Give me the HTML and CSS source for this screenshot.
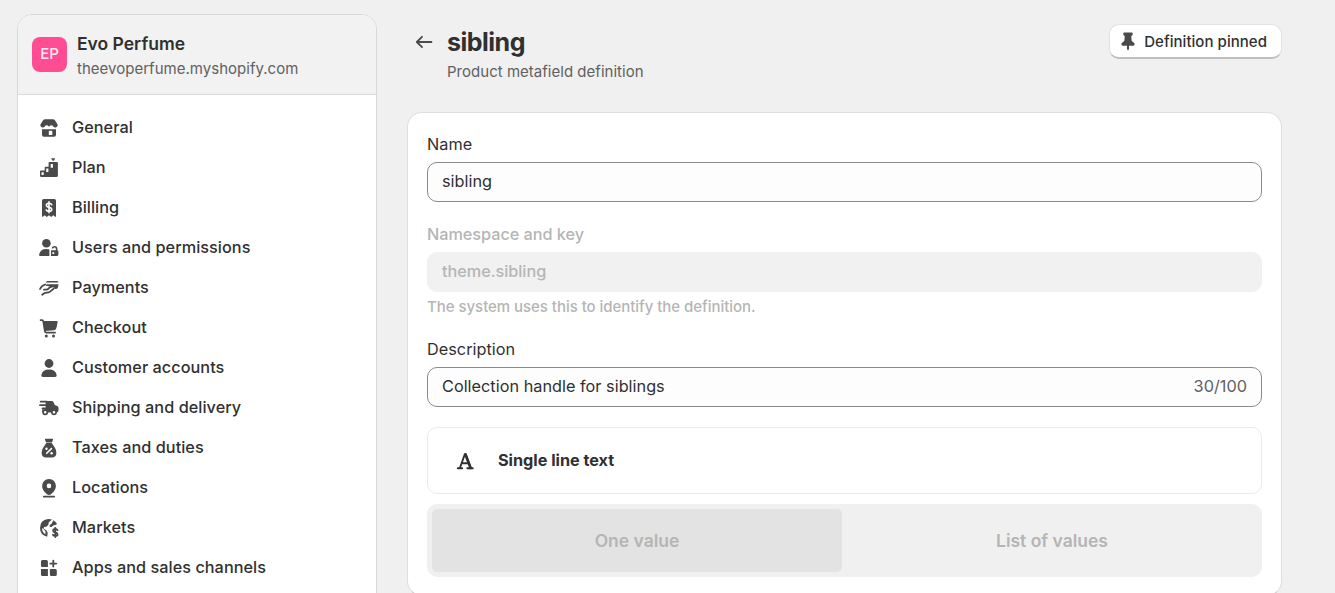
FILE: index.html
```html
<!DOCTYPE html>
<html lang="en">
<head>
<meta charset="utf-8">
<title>sibling</title>
<link rel="stylesheet" href="styles.css">
</head>
<body>
<div class="page">
  <aside class="sidebar">
    <header class="shop">
      <div class="avatar">EP</div>
      <div class="shop-text">
        <div class="shop-name">Evo Perfume</div>
        <div class="shop-url">theevoperfume.myshopify.com</div>
      </div>
    </header>
    <nav class="nav">
      <a class="nav-item"><svg class="icon" viewBox="0 0 20 20"><path d="M6 1.200h8q1.100 0 1.700.9L18 5.600q.7 1 .7 1.900a2.500 2.500 0 0 1-4.500.9 2 2 0 0 0-2-1.200q-1 0-1.400.9-.8.800-1.600 0-.4-.9-1.400-.9a2 2 0 0 0-2 1.200 2.500 2.500 0 0 1-4.500-.9q0-.9.700-1.900l2.300-3.500q.6-.9 1.700-.9z"/><path fill-rule="evenodd" d="M3 11.200h14v5.600q0 1.900-1.900 1.900H4.900Q3 18.700 3 16.800zM10.400 12.800q-.6 0-.6.600v3.600h3.500v-3.600q0-.6-.6-.6z"/></svg>General</a>
      <a class="nav-item"><svg class="icon" viewBox="0 0 20 20"><path d="M12.200.2h4L14.900 2.700h-1.400z"/><path fill-rule="evenodd" d="M13.700 4H18q.9 0 .9.900v12.500q0 1.600-1.600 1.600H2.600Q1 19 1 17.400v-4q0-.9.900-.9h3.800V9.700q0-.9.900-.9h3V4.900q0-.9.900-.9zM2.500 14.200v2.900h2.200v-2.900zm4.700-3.700v3.400h2.200v-3.400zm4.500-4.600v3.900h2.200V5.900z"/></svg>Plan</a>
      <a class="nav-item"><svg class="icon" viewBox="0 0 20 20"><path d="M4.700 1h10.600q1.700 0 1.700 1.700v16h-.9l-1.800-1.500-2.100 1.700-2.200-1.700-2.200 1.700-2.100-1.700-1.800 1.500H3v-16Q3 1 4.700 1z"/><path class="cut-line" d="M12.700 6.800Q12.200 5.300 10 5.300 7.400 5.300 7.400 7.200 7.400 8.700 10 9.200 12.700 9.700 12.700 11.500T10 13.400Q7.800 13.400 7.200 11.900M10 3.900v10.900"/></svg>Billing</a>
      <a class="nav-item"><svg class="icon" viewBox="0 0 20 20"><circle cx="7.400" cy="5.200" r="4.300"/><path d="M10.400 18H1.200q-1.400 0-1.100-1.300.9-5.700 7.300-5.700 1.700 0 3 .5z"/><path fill-rule="evenodd" d="M12 12.200h4.800v-1.500q0-1.200-1.200-1.200-1 0-1.200.9h-1.700q.2-2.500 2.900-2.500t2.800 2.700v1.600q1 .3 1 1.300v2.900q0 1.600-1.600 1.600H12zm1.300 2v1.700h1.900v-1.700z"/></svg>Users and permissions</a>
      <a class="nav-item"><svg class="icon" viewBox="0 0 20 20"><path d="M8.600 2.900h9.200q1.700 0 1.700 1.700H6.700q.4-1.700 1.900-1.700zM7.600 6.200h11.900l-.4 2.700q-.3 2.100-2.200 2.100h-1.300q.2-1.700-1.600-1.700-1 0-2 .8h-1.200q.4-2-1.500-2H7z"/><path class="line" d="M1 11Q2.600 7.500 6.200 6.500M5 11.700h2.400q1.200 0 2.100-1l1.200-1.300M14.600 10.700l-3.200 2.700q-1.500 1.300-3.500 1.300-2 0-3.400 1.100l-1.300 1"/></svg>Payments</a>
      <a class="nav-item"><svg class="icon" viewBox="0 0 20 20"><path d="M4.200 3h13.400q1.300 0 1 1.300l-1.200 5.800q-.4 1.900-2.300 2.100L6 13z"/><path class="line" d="M1.600 2.100h1.300q1.200 0 1.400 1.300l1.600 10q.2 1.300 1.500 1.300H16"/><circle cx="7.300" cy="18" r="1.500"/><circle cx="14.500" cy="18" r="1.500"/></svg>Checkout</a>
      <a class="nav-item"><svg class="icon" viewBox="0 0 20 20"><circle cx="10" cy="5.500" r="4.400"/><path d="M4 19q-2 0-1.700-1.700.8-5.900 7.700-5.900t7.700 5.900Q18 19 16 19z"/></svg>Customer accounts</a>
      <a class="nav-item"><svg class="icon" viewBox="0 0 20 20"><path d="M6.800 2.900h5.900q1.200 0 1.700 1.100L15.800 7l2.400.9q1.300.6 1.300 2v2.700q0 1.800-1.800 1.800H4.200q-1.100 0-1.100-1.700V11.500h3.500V3z"/><path class="line" d="M1.700 3.700h6M1 7.200h6M3.500 10.500h3"/><g class="wheel"><circle cx="6.200" cy="14.200" r="2.100"/><circle cx="15" cy="14.200" r="2.100"/></g></svg>Shipping and delivery</a>
      <a class="nav-item"><svg class="icon" viewBox="0 0 20 20"><path d="M6.700.8h6.700q.9 0 .6.900L12.900 4.600H7.100L6 1.700q-.3-.9.700-.9zM7.300 5h5.400l2.400 3.600q2.300 2.800 2.300 6 0 5-4.700 5H7.300q-4.700 0-4.700-5 0-3.200 2.300-6z"/><path class="cut-line" d="M7.700 15.300l4.700-4.700"/><circle class="cut" cx="7.500" cy="10.700" r="1.200"/><circle class="cut" cx="12.600" cy="15.200" r="1.200"/></svg>Taxes and duties</a>
      <a class="nav-item"><svg class="icon" viewBox="0 0 20 20"><path fill-rule="evenodd" d="M10 1a6.800 6.800 0 0 1 6.900 7q0 4.400-4.900 8.300-2 1.600-4 0Q3.100 12.400 3.100 8A6.800 6.800 0 0 1 10 1zm0 4.600a2.300 2.300 0 1 0 0 4.600 2.300 2.300 0 0 0 0-4.600z"/><path class="line" d="M4.800 18.600h10.400"/></svg>Locations</a>
      <a class="nav-item"><svg class="icon" viewBox="0 0 20 20"><path d="M9 1q2-.1 4 .6L9.700 4.500 9.300 7 7.200 8.700l-2 .3-.7 1.400 3 2 1.200 2.300-.5 4.100Q1 17 1 10 1 2 9 1z"/><path d="M14.300 2.200q2.600 1.300 3.800 3.900l-1.800 1q-2.500.2-3.700 2l-1.900-.3-.1-1.600 2.200-1.700z"/><path class="cut" d="M3 9.900l2 1.500 1.500 2.300v2.600Q3 14.400 3 9.900z"/><path class="line" d="M18.500 12.100q-.6-1.100-2.200-1.100-2.200 0-2.200 1.700 0 1.300 2.200 1.700t2.300 1.800q0 1.700-2.300 1.700-1.700 0-2.400-1.200M16.300 9.800v9.300"/></svg>Markets</a>
      <a class="nav-item"><svg class="icon" viewBox="0 0 20 20"><path d="M3.500 1.900h3.900q1.500 0 1.500 1.500v5.500H3.500Q2 8.900 2 7.400v-4q0-1.500 1.500-1.500zM2 10.900h6.900v7H3.500Q2 17.900 2 16.400zM10.900 10.900h5.400q1.500 0 1.500 1.500v4q0 1.500-1.500 1.500h-3.900q-1.500 0-1.500-1.500z"/><path class="line" d="M14.300 2.600v6M11.300 5.600h6"/></svg>Apps and sales channels</a>
    </nav>
  </aside>

  <main class="main">
    <header class="heading">
      <svg class="back" viewBox="0 0 20 20"><path d="M17.500 10H3M8 4.800L2.800 10 8 15.200"/></svg>
      <div class="titles">
        <h1 class="title">sibling</h1>
        <p class="subtitle">Product metafield definition</p>
      </div>
      <button class="pinned"><svg class="pin" viewBox="0 0 14 19"><path d="M3.200.5h7.600q.9 0 .9 1v1q0 .7-.7 1l-.8.500.5 4.900 2 1.500q1 .8 1 1.900 0 1.400-1.400 1.400H8v3.300l-1 1.500-1-1.500v-3.300H1.700q-1.400 0-1.400-1.400 0-1.100 1-1.900l2-1.500.5-4.900L3 3.500q-.7-.3-.7-1v-1q0-1 .9-1z"/></svg>Definition pinned</button>
    </header>

    <section class="card">
      <div class="field">
        <div class="label">Name</div>
        <div class="input">sibling</div>
      </div>
      <div class="field field-disabled">
        <div class="label">Namespace and key</div>
        <div class="input">theme.sibling</div>
        <div class="help">The system uses this to identify the definition.</div>
      </div>
      <div class="field">
        <div class="label">Description</div>
        <div class="input">Collection handle for siblings<span class="count">30/100</span></div>
      </div>
      <div class="type">
        <svg class="type-icon" viewBox="0 0 18 18"><path d="M1.800 16.200h4.400M11.300 16.200h5.500M3.900 16L8.800 2.200h.9L14.900 16M5.600 11.300h7.500"/><path class="stem" d="M9.500 2.500l5 13.500"/></svg>
        Single line text
      </div>
      <div class="segments">
        <div class="segment segment-on">One value</div>
        <div class="segment segment-off">List of values</div>
      </div>
    </section>
  </main>
</div>
</body>
</html>
```
FILE: styles.css
```css
* { box-sizing: border-box; }
body {
  margin: 0;
  height: 593px;
  overflow: hidden;
  background: #f0f0f0;
  color: #303030;
  font: 420 16.25px/25px Inter, "Liberation Sans", sans-serif;
  letter-spacing: .02px;
}
.page {
  display: flex;
  align-items: flex-start;
  gap: 30px;
  height: 593px;
  padding: 14px 53px 0 17px;
  overflow: hidden;
}
.sidebar {
  width: 360px;
  height: 620px;
  flex: none;
  overflow: hidden;
  background: #fff;
  border: 1px solid #d8d8d8;
  border-radius: 15px;
}
.shop {
  display: flex;
  align-items: center;
  gap: 10px;
  height: 80px;
  padding: 0 14px;
  background: #f2f2f2;
  border-bottom: 1px solid #dadada;
}
.avatar {
  width: 35px;
  height: 35px;
  border-radius: 8px;
  background: #ff4c93;
  color: #ffe9f2;
  font-size: 15px;
  font-weight: 550;
  line-height: 34px;
  text-align: center;
}
.shop-text { padding-top: 2px; }
.shop-name { font-size: 17.5px; font-weight: 600; letter-spacing: 0; }
.shop-url { color: #616161; font-size: 15px; }
.nav { padding: 12px 0 0 21px; }
.nav-item {
  display: flex;
  align-items: center;
  gap: 13px;
  height: 40px;
  font-weight: 550;
  letter-spacing: .04px;
}
.icon {
  width: 20px;
  height: 20px;
  margin-top: 2px;
  fill: #4a4a4a;
}
.icon .line { fill: none; stroke: #4a4a4a; stroke-width: 1.8; stroke-linecap: round; stroke-linejoin: round; }
.icon .cut { fill: #fff; }
.icon .cut-line { fill: none; stroke: #fff; stroke-width: 1.6; stroke-linecap: round; }
.wheel { fill: #fff; stroke: #4a4a4a; stroke-width: 1.7; }
.main { flex: 1; }
.heading {
  display: flex;
  align-items: flex-start;
  height: 98px;
  padding-top: 10px;
}
.back {
  width: 20px;
  height: 20px;
  margin: 8px 13px 0 7px;
  fill: none;
  stroke: #4a4a4a;
  stroke-width: 1.8;
  stroke-linecap: round;
  stroke-linejoin: round;
}
.titles { flex: 1; }
.title { margin: 3px 0 0; font-size: 25px; font-weight: 700; line-height: 31px; letter-spacing: -.5px; }
.subtitle { margin: 1px 0 0; color: #616161; font-size: 15px; line-height: 25px; }
.pinned {
  display: flex;
  align-items: center;
  gap: 9px;
  height: 35px;
  padding: 1px 14px 0 11px;
  border: 1px solid #e1e1e1;
  border-bottom: 2px solid #bebebe;
  border-radius: 10px;
  background: #fff;
  color: #303030;
  font: 550 15px/20px Inter, sans-serif;
  letter-spacing: .04px;
}
.pin { width: 14px; height: 19px; fill: #4a4a4a; }
.card {
  height: 484px;
  padding: 19px;
  border: 1px solid #dedede;
  border-bottom-color: #c4c4c4;
  border-radius: 15px;
  background: #fff;
}
.field { margin-bottom: 20px; }
.label { margin-bottom: 5px; }
.input {
  display: flex;
  justify-content: space-between;
  align-items: center;
  height: 40px;
  padding: 0 14px 2px;
  border: 1px solid #8a8a8a;
  border-radius: 10px;
  background: #fdfdfd;
}
.field-disabled { color: #b5b5b5; font-weight: 450; letter-spacing: -.04px; }
.field-disabled .input { border-color: #f1f1f1; background: #f1f1f1; }
.help { margin-top: 3px; font-size: 15px; line-height: 22px; padding-top: 1px; height: 22px; }
.count { color: #616161; }
.type {
  display: flex;
  align-items: center;
  gap: 24px;
  height: 67px;
  margin-bottom: 10px;
  padding-left: 28px;
  border: 1px solid #ebebeb;
  border-radius: 10px;
  font-weight: 650;
  letter-spacing: -.03px;
}
.type-icon { width: 18px; height: 18px; fill: none; stroke: #303030; stroke-width: 1.9; stroke-linejoin: round; stroke-linecap: round; }
.type-icon .stem { stroke-width: 2.6; }
.segments {
  display: grid;
  grid-template-columns: 410px 1fr;
  height: 73px;
  padding: 5px;
  border-radius: 10px;
  background: #f0f0f0;
}
.segment {
  display: flex;
  align-items: center;
  justify-content: center;
  border-radius: 5px;
  color: #b5b5b5;
  font-size: 17.5px;
  font-weight: 600;
  letter-spacing: 0;
}
.segment-on { background: #e3e3e3; }
.segment-off { padding-left: 5px; }
```
